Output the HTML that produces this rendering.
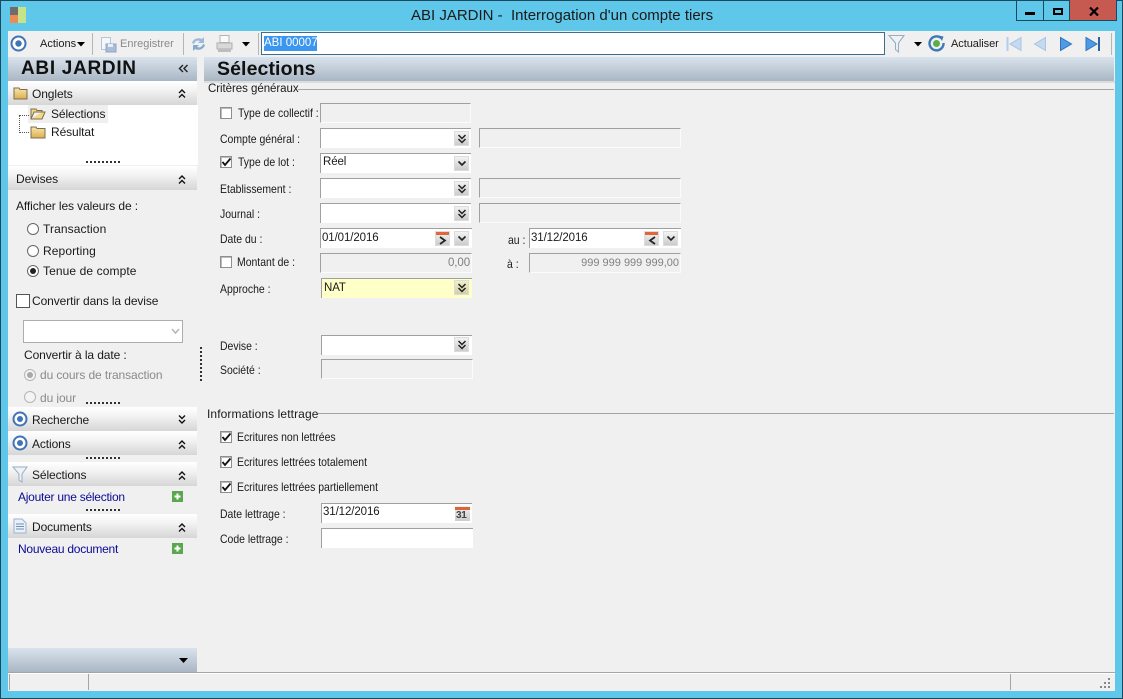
<!DOCTYPE html>
<html lang="fr"><head><meta charset="utf-8"><title>ABI JARDIN</title>
<style>
html,body{margin:0;padding:0;width:1123px;height:699px;overflow:hidden;background:#5fc7e9}
body{position:relative;font:12px "Liberation Sans",sans-serif;color:#1a1a1a}
div,span,svg{position:absolute}
.t{white-space:nowrap;line-height:14px;letter-spacing:-.1px}
.l{z-index:2;letter-spacing:0;transform:scaleX(.87);transform-origin:0 0}
.f{box-sizing:border-box;height:20px;width:151px;background:#fff;border-top:1px solid #a0a0a0;border-left:1px solid #a0a0a0}
.d{background:#f0f0f0;border-bottom:1px solid #fbfbfb;border-right:1px solid #fbfbfb}
.b{width:13px;height:13px;background:linear-gradient(#f2f2f2,#cbcbcb);border:1px solid #dcdcdc}
.h{left:8px;width:189px;height:24px;background:linear-gradient(#fff,#f4f4f4 35%,#d6d6d6)}
.bl{background:linear-gradient(#d9e3ed,#a9b6c3)}
.cb{width:10px;height:10px;background:#fff;border:1px solid #8e8e8e;box-shadow:inset 1px 1px 0 #bbb}
.dots{height:2px;width:35px;background:repeating-linear-gradient(90deg,#333 0 2px,transparent 2px 4px)}
.sep{width:1px;height:22px;background:#b5b5b5;top:33px}
.r{width:10px;height:10px;border:1px solid #666;border-radius:50%;background:#fff}
</style></head><body>

<!-- window frame -->
<div style="left:0;top:0;width:1123px;height:699px;box-sizing:border-box;border:1px solid #1c4a5c"></div>
<div style="left:10px;top:7px;width:16px;height:16px">
  <div style="left:0;top:0;width:8px;height:8px;background:#6d6d6d"></div>
  <div style="left:0;top:8px;width:8px;height:8px;background:#f08a55"></div>
  <div style="left:8px;top:0;width:8px;height:16px;background:#c5e48a"></div>
</div>
<div class="t" style="left:411px;top:8px;font-size:15px;line-height:16px;letter-spacing:0;color:#1a1a1a;white-space:pre">ABI JARDIN -  Interrogation d'un compte tiers</div>

<div style="left:1016px;top:0;width:28px;height:21px;border:1px solid #1c4a5c;border-top:0;box-sizing:border-box"><div style="left:8px;top:12px;width:10px;height:3px;background:#000"></div></div>
<div style="left:1044px;top:0;width:26px;height:21px;border:1px solid #1c4a5c;border-top:0;border-left:0;box-sizing:border-box"><div style="left:9px;top:8px;height:7px;box-sizing:border-box;width:10px;border:2px solid #000"></div></div>
<div style="left:1070px;top:0;width:47px;height:21px;background:#c75a50;border-bottom:1px solid #1c4a5c;border-right:1px solid #1c4a5c;box-sizing:border-box"><svg style="left:19px;top:7px" width="10" height="9"><path d="M1 0.5L9 8.5M9 0.5L1 8.5" stroke="#000" stroke-width="2.2"/></svg></div>

<!-- client -->
<div style="left:8px;top:31px;width:1107px;height:660px;background:#f0f0f0"></div>

<!-- toolbar -->
<svg style="left:10px;top:35px" width="17" height="17"><circle cx="8.5" cy="8.5" r="7" fill="#fff" stroke="#3f74b5" stroke-width="2"/><circle cx="8.5" cy="8.5" r="3.2" fill="#3f74b5"/></svg>
<div class="t" style="left:40px;top:37px;font-size:11px;letter-spacing:0">Actions</div>
<svg style="left:77px;top:42px" width="8" height="5"><path d="M0 0H8L4 4.5Z" fill="#000"/></svg>
<div class="sep" style="left:92px"></div>
<svg style="left:100px;top:36px" width="17" height="17"><rect x="1.5" y="1.5" width="9" height="12" fill="#f4f6fa" stroke="#b9c4d4"/><rect x="6" y="8" width="10" height="8" fill="#a9bddb" stroke="#8fa4c4"/><rect x="8" y="8" width="5" height="3" fill="#e8eef6"/></svg>
<div class="t" style="left:120px;top:37px;font-size:11px;letter-spacing:0;color:#8a8a8a">Enregistrer</div>
<div class="sep" style="left:183px"></div>
<svg style="left:190px;top:36px" width="17" height="16"><path d="M2 7C3 3 8 1 12 3L14 1V7H8L10 5C7 4 5 5 4 8Z" fill="#9db9d8"/><path d="M15 9C14 13 9 15 5 13L3 15V9H9L7 11C10 12 12 11 13 8Z" fill="#86a9cf"/></svg>
<svg style="left:215px;top:34px" width="19" height="19"><rect x="5" y="1.5" width="9" height="7" fill="#fafafa" stroke="#b5b5b5"/><path d="M2 9H17V15H2Z" fill="#d9d9d9" stroke="#b0b0b0"/><rect x="3" y="15" width="13" height="3" fill="#bdbdbd"/></svg>
<svg style="left:242px;top:42px" width="8" height="5"><path d="M0 0H8L4 4.5Z" fill="#000"/></svg>
<div class="sep" style="left:258px"></div>
<div style="left:261px;top:32px;width:624px;height:23px;box-sizing:border-box;background:#fff;border:1px solid #3d6d8f"></div>
<div class="t" style="left:264px;top:36px;width:53px;height:15px;background:#3a96ef;color:#fff;font-size:11.5px;line-height:15px;letter-spacing:0">ABI 00007</div>
<svg style="left:888px;top:34px" width="18" height="20"><path d="M1 1.5H16L10.5 9V18L7.5 15.5V9Z" fill="#eef3f8" stroke="#97aec4" stroke-width="1.1"/></svg>
<svg style="left:914px;top:42px" width="8" height="5"><path d="M0 0H8L4 4.5Z" fill="#000"/></svg>
<svg style="left:928px;top:35px" width="17" height="17"><path d="M13 3A7 7 0 1 0 15.5 8" fill="none" stroke="#3e78b8" stroke-width="2.4"/><path d="M10.5 0.5L15.5 1.5L14 6Z" fill="#3e78b8"/><circle cx="8.5" cy="8.5" r="3.5" fill="#58b04a"/></svg>
<div class="t" style="left:951px;top:37px;font-size:11px;letter-spacing:-.05px">Actualiser</div>
<svg style="left:1005px;top:36px" width="18" height="16"><path d="M2.5 1V15" stroke="#b4cdea" stroke-width="2"/><path d="M16 1.5V14.5L5 8Z" fill="#c5d9f0" stroke="#aac4e2"/></svg>
<svg style="left:1033px;top:36px" width="14" height="16"><path d="M12.5 1.5V14.5L1.5 8Z" fill="#c5d9f0" stroke="#aac4e2"/></svg>
<svg style="left:1059px;top:36px" width="14" height="16"><path d="M1.5 1.5V14.5L12.5 8Z" fill="#4d9be8" stroke="#3372b8"/></svg>
<svg style="left:1084px;top:36px" width="18" height="16"><path d="M2 1.5V14.5L13 8Z" fill="#4d9be8" stroke="#3372b8"/><path d="M15 1V15" stroke="#2c62a4" stroke-width="2"/></svg>
<div class="sep" style="left:1111px"></div>

<!-- left panel -->
<div class="bl" style="left:8px;top:57px;width:189px;height:24px"></div>
<div class="t" style="left:21px;top:59px;font-size:19px;line-height:20px;font-weight:bold;letter-spacing:.7px;color:#111">ABI JARDIN</div>
<svg style="left:178px;top:64px" width="11" height="10"><path d="M5 1L1.5 4.5L5 8M9.5 1L6 4.5L9.5 8" fill="none" stroke="#222" stroke-width="1.4"/></svg>

<div class="h" style="top:81px"></div>
<svg style="left:13px;top:85px" width="15" height="15"><defs><linearGradient id="g" x1="0" y1="0" x2="0" y2="1"><stop offset="0" stop-color="#f7e6ad"/><stop offset="1" stop-color="#dcae4d"/></linearGradient></defs><path d="M1 3H6L7 4.5H14V14H1Z" fill="url(#g)" stroke="#7c6d4c"/></svg>
<div class="t" style="left:32px;top:87px">Onglets</div>
<svg style="left:177px;top:88px" width="10" height="11"><path d="M2 5L5 2L8 5M2 9.5L5 6.5L8 9.5" fill="none" stroke="#111" stroke-width="1.4"/></svg>

<div style="left:8px;top:105px;width:190px;height:60px;background:#fff"></div>
<div style="left:28px;top:105px;width:80px;height:18px;background:#efefef;border:0"></div>
<div style="left:19px;top:115px;width:10px;height:18px;border-left:1px dotted #555;border-bottom:1px dotted #555;border-top:1px dotted #555;box-sizing:border-box"></div>
<svg style="left:30px;top:107px" width="16" height="14"><path d="M1 12V2H6L7 3.5H12V5H4L1 12H12L15 5H12" fill="#f3d885" stroke="#7c6d4c"/></svg>
<svg style="left:30px;top:125px" width="16" height="14"><path d="M1 2H6L7 3.5H15V13H1Z" fill="url(#g)" stroke="#7c6d4c"/></svg>
<div class="t" style="left:51px;top:107px">Sélections</div>
<div class="t" style="left:51px;top:125px">Résultat</div>
<div class="dots" style="left:86px;top:161px"></div>

<div class="h" style="top:166px"></div>
<div class="t" style="left:16px;top:172px">Devises</div>
<svg style="left:177px;top:174px" width="10" height="11"><path d="M2 5L5 2L8 5M2 9.5L5 6.5L8 9.5" fill="none" stroke="#111" stroke-width="1.4"/></svg>
<div class="t" style="left:16px;top:199px">Afficher les valeurs de :</div>
<div class="r" style="left:27px;top:223px"></div><div class="t" style="left:43px;top:222px;letter-spacing:.1px">Transaction</div>
<div class="r" style="left:27px;top:245px"></div><div class="t" style="left:43px;top:244px;letter-spacing:.1px">Reporting</div>
<div class="r" style="left:27px;top:265px"></div><div style="left:30px;top:268px;width:6px;height:6px;border-radius:50%;background:#222"></div><div class="t" style="left:43px;top:264px;letter-spacing:.1px">Tenue de compte</div>
<div style="left:16px;top:294px;width:12px;height:12px;background:#fff;border:1px solid #555"></div>
<div class="t" style="left:32px;top:294px">Convertir dans la devise</div>
<div style="left:23px;top:320px;width:158px;height:21px;background:#fff;border:1px solid #adadad"></div>
<svg style="left:171px;top:328px" width="9" height="7"><path d="M1 1L4.5 5L8 1" fill="none" stroke="#b8b8b8" stroke-width="1.6"/></svg>
<div class="t" style="left:24px;top:348px">Convertir à la date :</div>
<div class="r" style="left:24px;top:369px;border-color:#b5b5b5;background:#f4f4f4"></div><div style="left:27px;top:372px;width:6px;height:6px;border-radius:50%;background:#a8a8a8"></div>
<div class="t" style="left:40px;top:368px;color:#8a8a8a">du cours de transaction</div>
<div style="left:8px;top:391px;width:189px;height:12px;overflow:hidden">
  <div class="r" style="left:16px;top:0;border-color:#b5b5b5;background:#f4f4f4"></div>
  <div class="t" style="left:32px;top:0;color:#8a8a8a">du jour</div>
</div>
<div class="dots" style="left:86px;top:402px"></div>
<div style="left:200px;top:347px;width:2px;height:34px;background:repeating-linear-gradient(#333 0 2px,transparent 2px 4px)"></div>

<div class="h" style="top:407px"></div>
<svg style="left:12px;top:411px" width="16" height="16"><circle cx="8" cy="8" r="6.5" fill="#fff" stroke="#3f74b5" stroke-width="2"/><circle cx="8" cy="8" r="3" fill="#3f74b5"/></svg>
<div class="t" style="left:32px;top:413px">Recherche</div>
<svg style="left:177px;top:414px" width="10" height="11"><path d="M2 1.5L5 4.5L8 1.5M2 6L5 9L8 6" fill="none" stroke="#111" stroke-width="1.4"/></svg>

<div class="h" style="top:431px"></div>
<svg style="left:12px;top:435px" width="16" height="16"><circle cx="8" cy="8" r="6.5" fill="#fff" stroke="#3f74b5" stroke-width="2"/><circle cx="8" cy="8" r="3" fill="#3f74b5"/></svg>
<div class="t" style="left:32px;top:437px">Actions</div>
<svg style="left:177px;top:439px" width="10" height="11"><path d="M2 5L5 2L8 5M2 9.5L5 6.5L8 9.5" fill="none" stroke="#111" stroke-width="1.4"/></svg>
<div class="dots" style="left:86px;top:457px"></div>

<div class="h" style="top:462px"></div>
<svg style="left:12px;top:466px" width="16" height="17"><path d="M1 1H15L10 8V16L7 14V8Z" fill="#eef3f8" stroke="#97aec4"/></svg>
<div class="t" style="left:32px;top:468px">Sélections</div>
<svg style="left:177px;top:470px" width="10" height="11"><path d="M2 5L5 2L8 5M2 9.5L5 6.5L8 9.5" fill="none" stroke="#111" stroke-width="1.4"/></svg>
<div class="t" style="left:18px;top:490px;color:#0a0a96;letter-spacing:-.25px">Ajouter une sélection</div>
<svg style="left:172px;top:491px" width="11" height="11"><rect width="11" height="11" fill="#5aa84e"/><path d="M5.5 2.5V8.5M2.5 5.5H8.5" stroke="#fff" stroke-width="2"/></svg>
<div class="dots" style="left:86px;top:509px"></div>

<div class="h" style="top:514px"></div>
<svg style="left:13px;top:518px" width="14" height="16"><path d="M1 1H9L13 5V15H1Z" fill="#eaf0f8" stroke="#9fb2cc"/><path d="M3 6H11M3 8.5H11M3 11H11" stroke="#6f8fbc"/></svg>
<div class="t" style="left:32px;top:520px">Documents</div>
<svg style="left:177px;top:522px" width="10" height="11"><path d="M2 5L5 2L8 5M2 9.5L5 6.5L8 9.5" fill="none" stroke="#111" stroke-width="1.4"/></svg>
<div class="t" style="left:18px;top:542px;color:#0a0a96;letter-spacing:-.25px">Nouveau document</div>
<svg style="left:172px;top:543px" width="11" height="11"><rect width="11" height="11" fill="#5aa84e"/><path d="M5.5 2.5V8.5M2.5 5.5H8.5" stroke="#fff" stroke-width="2"/></svg>

<div class="bl" style="left:8px;top:648px;width:189px;height:24px"></div>
<svg style="left:179px;top:658px" width="9" height="6"><path d="M0 0H9L4.5 5Z" fill="#000"/></svg>

<!-- main header -->
<div class="bl" style="left:204px;top:57px;width:910px;height:24px"></div>
<div class="t" style="left:217px;top:59px;font-size:19.5px;line-height:21px;font-weight:bold;letter-spacing:.1px;color:#111">Sélections</div>
<div style="left:204px;top:81px;width:911px;height:2px;background:#dcdcdc"></div>

<!-- group 1 -->
<div style="left:298px;top:89px;width:816px;height:1px;background:#a5a5a5"></div>
<div class="t" style="left:208px;top:82px;font-size:11.5px;letter-spacing:-.05px">Critères généraux</div>

<div class="cb" style="left:220px;top:107px"></div>
<div class="f d" style="left:320px;top:103px"></div>
<div class="t l" style="left:238px;top:106px">Type de collectif :</div>

<div class="t l" style="left:220px;top:132px">Compte général :</div>
<div class="f" style="left:320px;top:128px"></div>
<div class="b" style="left:454px;top:131px"></div>
<svg style="left:457px;top:134px" width="10" height="10"><path d="M1.5 1L5 4.5L8.5 1M1.5 5L5 8.5L8.5 5" fill="none" stroke="#222" stroke-width="1.5"/></svg>
<div class="f d" style="left:479px;top:128px;width:202px"></div>

<div class="cb" style="left:220px;top:156px"></div>
<svg style="left:221px;top:157px" width="11" height="11"><path d="M1.5 5L4 8L9.5 1.5" fill="none" stroke="#111" stroke-width="1.8"/></svg>
<div class="t l" style="left:238px;top:155px">Type de lot :</div>
<div class="f" style="left:320px;top:153px"></div>
<div class="t" style="left:323px;top:155px;font-size:11.5px">Réel</div>
<div class="b" style="left:454px;top:156px"></div>
<svg style="left:457px;top:160px" width="10" height="8"><path d="M1.5 1.5L5 5L8.5 1.5" fill="none" stroke="#222" stroke-width="1.6"/></svg>

<div class="t l" style="left:220px;top:182px">Etablissement :</div>
<div class="f" style="left:320px;top:178px"></div>
<div class="b" style="left:454px;top:181px"></div>
<svg style="left:457px;top:184px" width="10" height="10"><path d="M1.5 1L5 4.5L8.5 1M1.5 5L5 8.5L8.5 5" fill="none" stroke="#222" stroke-width="1.5"/></svg>
<div class="f d" style="left:479px;top:178px;width:202px"></div>

<div class="t l" style="left:220px;top:207px">Journal :</div>
<div class="f" style="left:320px;top:203px"></div>
<div class="b" style="left:454px;top:206px"></div>
<svg style="left:457px;top:209px" width="10" height="10"><path d="M1.5 1L5 4.5L8.5 1M1.5 5L5 8.5L8.5 5" fill="none" stroke="#222" stroke-width="1.5"/></svg>
<div class="f d" style="left:479px;top:203px;width:202px"></div>

<div class="t l" style="left:220px;top:232px">Date du :</div>
<div class="f" style="left:320px;top:228px;width:152px"></div>
<div class="t" style="left:322px;top:231px;font-size:11.5px">01/01/2016</div>
<div class="b" style="left:435px;top:231px"></div><div style="left:436px;top:232px;width:13px;height:3px;background:#e2663c"></div>
<svg style="left:438px;top:236px" width="10" height="9"><path d="M2 1L7 4.5L2 8" fill="none" stroke="#222" stroke-width="1.7"/></svg>
<div class="b" style="left:454px;top:231px"></div>
<svg style="left:457px;top:235px" width="10" height="8"><path d="M1.5 1.5L5 5L8.5 1.5" fill="none" stroke="#222" stroke-width="1.6"/></svg>
<div class="t l" style="left:508px;top:233px">au :</div>
<div class="f" style="left:529px;top:228px;width:152px"></div>
<div class="t" style="left:531px;top:231px;font-size:11.5px">31/12/2016</div>
<div class="b" style="left:644px;top:231px"></div><div style="left:645px;top:232px;width:13px;height:3px;background:#e2663c"></div>
<svg style="left:647px;top:236px" width="10" height="9"><path d="M8 1L3 4.5L8 8" fill="none" stroke="#222" stroke-width="1.7"/></svg>
<div class="b" style="left:663px;top:231px"></div>
<svg style="left:666px;top:235px" width="10" height="8"><path d="M1.5 1.5L5 5L8.5 1.5" fill="none" stroke="#222" stroke-width="1.6"/></svg>

<div class="cb" style="left:220px;top:256px"></div>
<div class="t l" style="left:237px;top:255px">Montant de :</div>
<div class="f d" style="left:320px;top:253px;width:152px"></div>
<div class="t" style="left:420px;top:256px;width:50px;text-align:right;color:#808080;font-size:11.5px">0,00</div>
<div class="t l" style="left:507px;top:257px">à :</div>
<div class="f d" style="left:529px;top:253px;width:152px"></div>
<div class="t" style="left:560px;top:256px;width:119px;text-align:right;color:#808080;font-size:11px;letter-spacing:0">999 999 999 999,00</div>

<div class="t l" style="left:220px;top:282px">Approche :</div>
<div class="f" style="left:321px;top:278px;background:#ffffc8"></div>
<div class="t" style="left:324px;top:281px;font-size:11.5px">NAT</div>
<div class="b" style="left:454px;top:280px;background:linear-gradient(#f0f0c8,#cfcfa8)"></div>
<svg style="left:457px;top:283px" width="10" height="10"><path d="M1.5 1L5 4.5L8.5 1M1.5 5L5 8.5L8.5 5" fill="none" stroke="#222" stroke-width="1.5"/></svg>

<div class="t l" style="left:220px;top:339px">Devise :</div>
<div class="f" style="left:321px;top:335px"></div>
<div class="b" style="left:454px;top:337px"></div>
<svg style="left:457px;top:340px" width="10" height="10"><path d="M1.5 1L5 4.5L8.5 1M1.5 5L5 8.5L8.5 5" fill="none" stroke="#222" stroke-width="1.5"/></svg>

<div class="t l" style="left:220px;top:363px">Société :</div>
<div class="f d" style="left:321px;top:359px;width:152px"></div>

<!-- group 2 -->
<div style="left:318px;top:413px;width:796px;height:1px;background:#a5a5a5"></div>
<div class="t" style="left:207px;top:407px;letter-spacing:.1px">Informations lettrage</div>

<div class="cb" style="left:220px;top:431px"></div>
<svg style="left:221px;top:432px" width="11" height="11"><path d="M1.5 5L4 8L9.5 1.5" fill="none" stroke="#111" stroke-width="1.8"/></svg>
<div class="t l" style="left:237px;top:430px">Ecritures non lettrées</div>
<div class="cb" style="left:220px;top:456px"></div>
<svg style="left:221px;top:457px" width="11" height="11"><path d="M1.5 5L4 8L9.5 1.5" fill="none" stroke="#111" stroke-width="1.8"/></svg>
<div class="t l" style="left:237px;top:455px">Ecritures lettrées totalement</div>
<div class="cb" style="left:220px;top:481px"></div>
<svg style="left:221px;top:482px" width="11" height="11"><path d="M1.5 5L4 8L9.5 1.5" fill="none" stroke="#111" stroke-width="1.8"/></svg>
<div class="t l" style="left:237px;top:480px">Ecritures lettrées partiellement</div>

<div class="t l" style="left:220px;top:507px">Date lettrage :</div>
<div class="f" style="left:321px;top:503px;width:151px"></div>
<div class="t" style="left:323px;top:505px;font-size:11.5px">31/12/2016</div>
<div style="left:455px;top:506px;width:15px;height:15px;background:linear-gradient(#eee,#ccc)"></div><div style="left:455px;top:507px;width:15px;height:3px;background:#d9653d"></div>
<div class="t" style="left:456px;top:510px;font-size:10px;line-height:11px;font-weight:bold;letter-spacing:-.3px;color:#444">31</div>

<div class="t l" style="left:220px;top:532px">Code lettrage :</div>
<div class="f" style="left:321px;top:528px;width:152px"></div>

<!-- status bar -->
<div style="left:8px;top:672px;width:1107px;height:1px;background:#a5a5a5"></div>
<div style="left:8px;top:673px;width:1107px;height:18px;border-top:1px solid #fff"></div>
<div style="left:9px;top:674px;width:1px;height:16px;background:#a5a5a5"></div>
<div style="left:88px;top:674px;width:1px;height:16px;background:#a5a5a5"></div>
<div style="left:1010px;top:674px;width:1px;height:16px;background:#a5a5a5"></div>
<svg style="left:1100px;top:678px" width="11" height="11" fill="#888"><rect x="8" y="0" width="2" height="2"/><rect x="4" y="4" width="2" height="2"/><rect x="8" y="4" width="2" height="2"/><rect x="0" y="8" width="2" height="2"/><rect x="4" y="8" width="2" height="2"/><rect x="8" y="8" width="2" height="2"/></svg>

</body></html>
